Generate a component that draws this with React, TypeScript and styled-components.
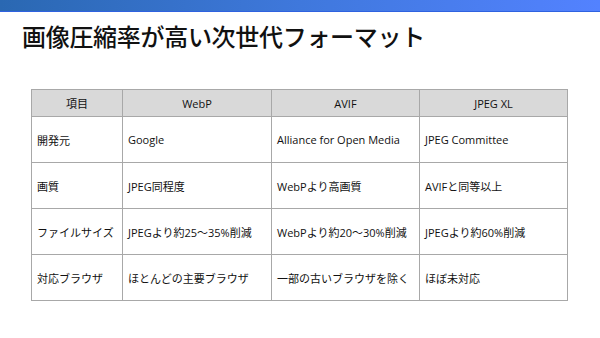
import React from "react";
import styled, { createGlobalStyle } from "styled-components";

const Global = createGlobalStyle`
  html, body { margin: 0; padding: 0; background: #ffffff; }
  body { font-family: "Noto Sans CJK JP", "Noto Sans", sans-serif; }
`;

const Page = styled.div`
  width: 600px;
  height: 338px;
  background: #ffffff;
  overflow: hidden;
  display: flex;
  flex-direction: column;
`;

const TopBar = styled.div`
  height: 11px;
  flex: none;
  background: linear-gradient(90deg, #2a68b2 0%, #3f78dc 50%, #5382ff 100%);
  border-bottom: 1px solid #2f62e0;
`;

const Title = styled.h1`
  margin: 0;
  padding: 8px 0 0 22px;
  height: 40px;
  font-family: "Noto Sans CJK JP", sans-serif;
  font-weight: 500;
  font-size: 24px;
  line-height: 32px;
  color: #111111;
  letter-spacing: -0.3px;
`;

const TableWrap = styled.div`
  padding: 29px 0 0 31px;
`;

const Table = styled.table`
  border-collapse: collapse;
  table-layout: fixed;
  width: 537px;
  font-family: "Open Sans", "Noto Sans CJK JP", sans-serif;
  font-size: 11px;
  color: #111111;
`;

const HeadCell = styled.th`
  height: 26px;
  padding: 0;
  background: #d9d9d9;
  border: 1px solid #a8a8a8;
  font-weight: 400;
  text-align: center;
  vertical-align: middle;
`;

const Cell = styled.td`
  height: 45px;
  padding: 0 0 0 5px;
  border: 1px solid #a8a8a8;
  text-align: left;
  vertical-align: middle;
  white-space: nowrap;
`;

const cols = [91, 149, 148, 148];
const head = ["項目", "WebP", "AVIF", "JPEG XL"];
const rows = [
  ["開発元", "Google", "Alliance for Open Media", "JPEG Committee"],
  ["画質", "JPEG同程度", "WebPより高画質", "AVIFと同等以上"],
  ["ファイルサイズ", "JPEGより約25～35%削減", "WebPより約20～30%削減", "JPEGより約60%削減"],
  ["対応ブラウザ", "ほとんどの主要ブラウザ", "一部の古いブラウザを除く", "ほぼ未対応"],
];

export default function App() {
  return (
    <Page>
      <Global />
      <TopBar />
      <Title>画像圧縮率が高い次世代フォーマット</Title>
      <TableWrap>
        <Table>
          <colgroup>
            {cols.map((w, i) => (
              <col key={i} style={{ width: w }} />
            ))}
          </colgroup>
          <thead>
            <tr>
              {head.map((h) => (
                <HeadCell key={h}>{h}</HeadCell>
              ))}
            </tr>
          </thead>
          <tbody>
            {rows.map((r) => (
              <tr key={r[0]}>
                {r.map((c, i) => (
                  <Cell key={i}>{c}</Cell>
                ))}
              </tr>
            ))}
          </tbody>
        </Table>
      </TableWrap>
    </Page>
  );
}
